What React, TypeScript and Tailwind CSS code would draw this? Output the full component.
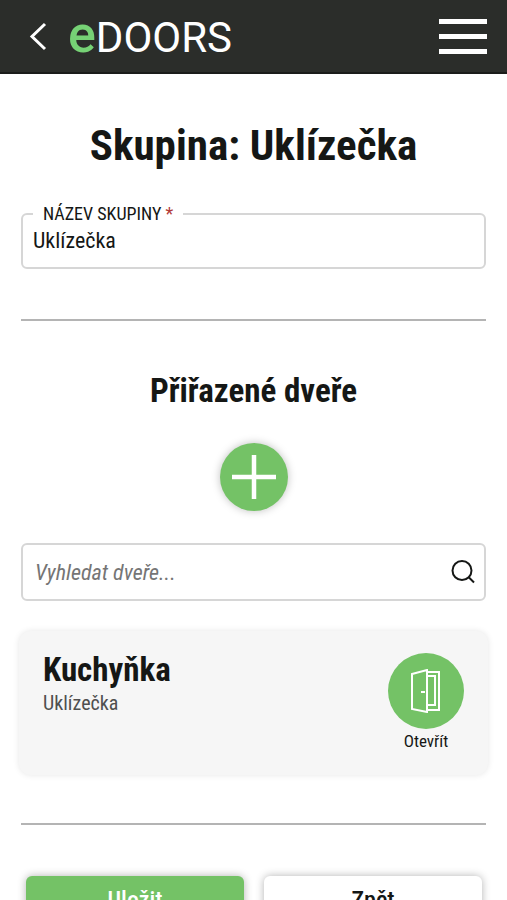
import { useState } from "react";

const doors = [{ id: 1, name: "Kuchyňka", group: "Uklízečka" }];

function Header() {
  return (
    <header className="flex h-[74px] items-center justify-between border-b-2 border-[#1b1c1a] bg-[#2b2d2a] pr-5 pl-7 text-white">
      <div className="flex items-center gap-5">
        <button type="button" aria-label="Zpět na seznam">
          <svg width="20" height="32" viewBox="0 0 20 32" fill="none" stroke="currentColor" strokeWidth="3">
            <path d="M17 4 4 16.5 17 29" />
          </svg>
        </button>
        <a href="#" className="flex items-baseline font-[Roboto,sans-serif] text-[42px] leading-[48px]">
          <span className="text-[52px] leading-[48px] font-medium text-[#76d275]">e</span>
          <span>DOORS</span>
        </a>
      </div>
      <button type="button" aria-label="Menu" className="flex w-12 flex-col gap-[10px]">
        <span className="h-[5px] w-full bg-white" />
        <span className="h-[5px] w-full bg-white" />
        <span className="h-[5px] w-full bg-white" />
      </button>
    </header>
  );
}

function DoorIcon() {
  return (
    <svg width="30" height="44" viewBox="0 0 30 44" fill="none" stroke="white" strokeWidth="2">
      <path d="M1 5 16 1v42L1 40z" />
      <path d="M16 3h12v38H16" />
      <path d="M17 7h7v29h-7" />
      <path d="M10 23h4" />
    </svg>
  );
}

function DoorCard({ name, group }: { name: string; group: string }) {
  return (
    <article className="-mx-[2px] flex items-start justify-between rounded-xl bg-[#f6f6f6] px-6 py-[22px] shadow-[0_0_6px_rgba(0,0,0,0.1)]">
      <div>
        <h3 className="text-[33px] leading-[34px] font-bold">{name}</h3>
        <p className="mt-1 text-xl leading-6 text-[#4f4f4f]">{group}</p>
      </div>
      <button type="button" className="flex flex-col items-center text-[17px] leading-6">
        <span className="flex size-[76px] items-center justify-center rounded-full bg-[#74c266]">
          <DoorIcon />
        </span>
        Otevřít
      </button>
    </article>
  );
}

export default function App() {
  const [name, setName] = useState("Uklízečka");
  const [search, setSearch] = useState("");

  return (
    <div className="bg-white font-['Roboto_Condensed','Liberation_Sans_Narrow',sans-serif] text-[#151715]">
      <Header />
      <main className="px-[21px] pt-[45px] pb-10">
        <h1 className="text-center text-[43px] leading-[52px] font-bold">Skupina: Uklízečka</h1>

        <fieldset className="mt-8 rounded-md border-2 border-[#d6d6d6] px-[10px] pb-3">
          <legend className="px-[10px] text-[18px] leading-[22px]">
            <label htmlFor="group-name">
              NÁZEV SKUPINY <span className="text-[#b23a3a]">*</span>
            </label>
          </legend>
          <input
            id="group-name"
            required
            value={name}
            onChange={(e) => setName(e.target.value)}
            className="block h-[30px] w-full text-[22px] outline-none"
          />
        </fieldset>

        <hr className="mt-[50px] border-t-2 border-[#b4b4b4]" />

        <h2 className="mt-[50px] text-center text-[33px] leading-10 font-bold">Přiřazené dveře</h2>

        <button
          type="button"
          aria-label="Přidat dveře"
          className="mx-auto mt-8 flex size-[68px] items-center justify-center rounded-full bg-[#74c266] shadow-[0_0_8px_rgba(0,0,0,0.25)]"
        >
          <svg width="44" height="44" viewBox="0 0 44 44" fill="none" stroke="white" strokeWidth="4.5">
            <path d="M22 0v44M0 22h44" />
          </svg>
        </button>

        <div className="mt-8 flex h-[58px] items-center rounded-md border-2 border-[#d6d6d6] pr-[9px] pl-3">
          <input
            type="search"
            aria-label="Vyhledat dveře"
            placeholder="Vyhledat dveře..."
            value={search}
            onChange={(e) => setSearch(e.target.value)}
            className="h-8 min-w-0 flex-1 text-[22px] outline-none placeholder:text-[#757575] placeholder:italic"
          />
          <button type="button" aria-label="Hledat">
            <svg width="24" height="24" viewBox="0 0 24 24" fill="none" stroke="currentColor" strokeWidth="2">
              <circle cx="11" cy="10.500" r="9.500" />
              <path d="m17.500 17 5.500 5.500" />
            </svg>
          </button>
        </div>

        <section className="mt-[30px] flex flex-col gap-4">
          {doors.map((door) => (
            <DoorCard key={door.id} name={door.name} group={door.group} />
          ))}
        </section>

        <hr className="mt-12 border-t-2 border-[#b4b4b4]" />

        <div className="mt-[51px] flex gap-5 pr-1 pl-[5px]">
          <button
            type="button"
            className="h-12 flex-1 rounded-md bg-[#74c266] text-2xl font-medium text-white shadow-[0_0_8px_rgba(0,0,0,0.3)]"
          >
            Uložit
          </button>
          <button
            type="button"
            className="h-12 flex-1 rounded-md bg-white text-2xl font-medium shadow-[0_0_8px_rgba(0,0,0,0.3)]"
          >
            Zpět
          </button>
        </div>
      </main>
    </div>
  );
}
